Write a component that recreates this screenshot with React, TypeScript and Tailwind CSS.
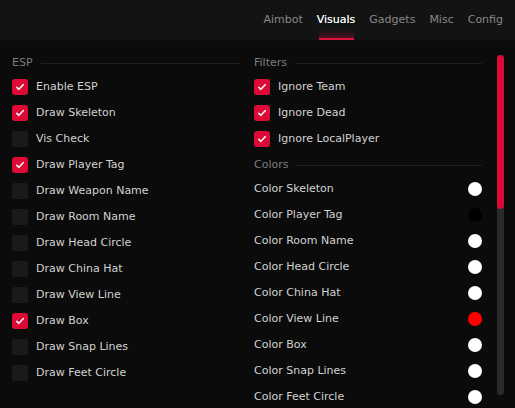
import React, { useState } from "react";

const font = { fontFamily: '"DejaVu Sans", "Liberation Sans", sans-serif' };

const tabs = ["Aimbot", "Visuals", "Gadgets", "Misc", "Config"];

const espItems: [string, boolean][] = [
  ["Enable ESP", true],
  ["Draw Skeleton", true],
  ["Vis Check", false],
  ["Draw Player Tag", true],
  ["Draw Weapon Name", false],
  ["Draw Room Name", false],
  ["Draw Head Circle", false],
  ["Draw China Hat", false],
  ["Draw View Line", false],
  ["Draw Box", true],
  ["Draw Snap Lines", false],
  ["Draw Feet Circle", false],
];

const filterItems: [string, boolean][] = [
  ["Ignore Team", true],
  ["Ignore Dead", true],
  ["Ignore LocalPlayer", true],
];

const colorItems: [string, string][] = [
  ["Color Skeleton", "#ffffff"],
  ["Color Player Tag", "#000000"],
  ["Color Room Name", "#ffffff"],
  ["Color Head Circle", "#ffffff"],
  ["Color China Hat", "#ffffff"],
  ["Color View Line", "#ff0000"],
  ["Color Box", "#ffffff"],
  ["Color Snap Lines", "#ffffff"],
  ["Color Feet Circle", "#ffffff"],
];

function SectionTitle({ label, className = "" }: { label: string; className?: string }) {
  return (
    <div className={`flex h-[22px] items-center gap-[8px] ${className}`}>
      <span className="text-[11px] text-[#7c7c7c]">{label}</span>
      <div className="h-px flex-1 bg-[#1f1f1f]" />
    </div>
  );
}

function Check({ label, initial }: { label: string; initial: boolean }) {
  const [on, setOn] = useState(initial);
  return (
    <button onClick={() => setOn(!on)} className="flex h-[26px] w-full items-center gap-[8px] text-left">
      <span
        className={`flex h-[16px] w-[16px] shrink-0 items-center justify-center rounded-[3px] ${
          on ? "bg-[#dc0a37]" : "bg-[#1b1b1b]"
        }`}
      >
        {on && (
          <svg width="16" height="16" viewBox="0 0 16 16" fill="none">
            <path d="M4.8 8.3l2.1 2 4.3-4.6" stroke="#f4f4f4" strokeWidth="1.6" strokeLinecap="round" strokeLinejoin="round" />
          </svg>
        )}
      </span>
      <span className="text-[11px] text-[#d2d2d2]">{label}</span>
    </button>
  );
}

function ColorRow({ label, color }: { label: string; color: string }) {
  return (
    <div className="flex h-[26px] items-center justify-between">
      <span className="text-[11px] text-[#d2d2d2]">{label}</span>
      <span className="h-[14px] w-[14px] rounded-full" style={{ background: color }} />
    </div>
  );
}

export default function App() {
  const [active, setActive] = useState("Visuals");

  return (
    <div className="flex h-[408px] w-[515px] flex-col overflow-hidden bg-[#0b0b0b]" style={font}>
      {/* top tab bar */}
      <div className="flex h-[41px] shrink-0 items-stretch justify-end gap-[14px] border-b border-[#0e0e0e] bg-[#131313] pr-[12px]">
        {tabs.map((t) => (
          <button
            key={t}
            onClick={() => setActive(t)}
            className={`relative flex items-center text-[11px] ${
              t === active ? "text-[#f0f0f0] [text-shadow:0_0_0.6px_#f0f0f0]" : "text-[#888888]"
            }`}
          >
            {t}
            {t === active && (
              <span className="absolute bottom-0 left-[2px] right-[1px] h-[10px] border-b-2 border-[#e0103e] bg-gradient-to-t from-[#e0103e]/30 to-transparent" />
            )}
          </button>
        ))}
      </div>

      <div className="flex min-h-0 flex-1">
        <div className="grid flex-1 grid-cols-2 gap-[14px] pl-[12px] pr-[15px] pt-[11px]">
          <div>
            <SectionTitle label="ESP" />
            {espItems.map(([l, v]) => (
              <Check key={l} label={l} initial={v} />
            ))}
          </div>
          <div>
            <SectionTitle label="Filters" />
            {filterItems.map(([l, v]) => (
              <Check key={l} label={l} initial={v} />
            ))}
            <SectionTitle label="Colors" className="mt-[2px]" />
            {colorItems.map(([l, c]) => (
              <ColorRow key={l} label={l} color={c} />
            ))}
          </div>
        </div>

        {/* scrollbar */}
        <div className="mb-[13px] mr-[11px] mt-[14px] flex w-[7px] flex-col rounded-full bg-[#2b2b2b]">
          <div className="h-[154px] rounded-full bg-[#dc0a37]" />
        </div>
      </div>
    </div>
  );
}
